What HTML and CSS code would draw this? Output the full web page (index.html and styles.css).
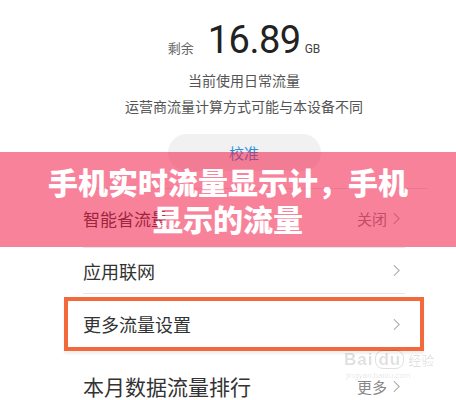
FILE: index.html
```html
<!DOCTYPE html>
<html lang="zh-CN">
<head>
  <meta charset="UTF-8">
  <meta name="viewport" content="width=device-width, initial-scale=1.0">
  <title>手机实时流量显示计</title>
  <link rel="stylesheet" href="styles.css">
</head>
<body>
  <div class="page">
    <div class="content">
      <div class="summary">
        <div class="remain">
          <span class="remain-label">剩余</span>
          <span class="remain-value">16.89</span>
          <span class="remain-unit">GB</span>
        </div>
        <div class="desc">当前使用日常流量</div>
        <div class="note">运营商流量计算方式可能与本设备不同</div>
        <div class="calibrate">校准</div>
      </div>
      <div class="divider wide"></div>
      <div class="row row-saver">
        <span class="row-title">智能省流量</span>
        <span class="row-extra">关闭<svg class="chev" viewBox="0 0 8 14"><polyline points="1,1 7,7 1,13"/></svg></span>
      </div>
      <div class="divider"></div>
      <div class="row row-apps">
        <span class="row-title">应用联网</span>
        <svg class="chev" viewBox="0 0 8 14"><polyline points="1,1 7,7 1,13"/></svg>
      </div>
      <div class="divider"></div>
      <div class="row row-more highlight">
        <span class="row-title">更多流量设置</span>
        <svg class="chev" viewBox="0 0 8 14"><polyline points="1,1 7,7 1,13"/></svg>
      </div>
      <div class="row row-rank">
        <span class="row-title">本月数据流量排行</span>
        <span class="row-extra">更多<svg class="chev" viewBox="0 0 8 14"><polyline points="1,1 7,7 1,13"/></svg></span>
      </div>
    </div>

    <div class="banner">
      <h1>手机实时流量显示计，手机<br>显示的流量</h1>
    </div>

    <div class="watermark">
      <span class="wm-logo">Bai<span class="wm-du">du</span></span><span class="wm-cn">经验</span>
      <div class="wm-url">jingyan.baidu.com</div>
    </div>
  </div>
</body>
</html>
```

FILE: styles.css
```css
body {
  margin: 0;
  padding: 0;
  background: #fff;
  font-family: "Noto Sans CJK SC", "Noto Sans", sans-serif;
  color: #333;
}
.page {
  position: relative;
  width: 456px;
  height: 400px;
  overflow: hidden;
  background: #fff;
}
.content {
  margin-left: 64px;
  width: 360px;
}
.summary {
  display: flex;
  flex-direction: column;
  align-items: center;
  padding-top: 18px;
}
.remain {
  display: flex;
  align-items: baseline;
  height: 44px;
  line-height: 44px;
}
.remain-label {
  font-size: 13px;
  color: #666;
  margin-right: 14px;
}
.remain-value {
  font-family: Roboto, "Noto Sans", sans-serif;
  font-size: 38px;
  color: #222;
  letter-spacing: -0.5px;
}
.remain-unit {
  font-family: Roboto, "Noto Sans", sans-serif;
  font-size: 12px;
  color: #444;
  margin-left: 4px;
}
.desc {
  margin-top: 7px;
  font-size: 14px;
  line-height: 22px;
  color: #555;
}
.note {
  margin-top: 4px;
  font-size: 14px;
  line-height: 22px;
  color: #555;
}
.calibrate {
  margin-top: 17px;
  width: 153px;
  height: 37px;
  line-height: 37px;
  border-radius: 19px;
  background: #f1f1f1;
  text-align: center;
  font-size: 15px;
  color: #2a8fd8;
}
.divider {
  height: 1px;
  background: #e6e6e6;
  margin: 0 19px;
}
.divider.wide {
  margin: 17px -4px 0 0;
}
.row {
  display: flex;
  align-items: center;
  justify-content: space-between;
  padding: 0 24px 0 19px;
  color: #333;
}
.row-saver {
  height: 58px;
  font-size: 17px;
}
.row-apps {
  height: 45px;
  font-size: 18px;
}
.row-more {
  height: 46px;
  font-size: 18px;
  margin-top: 3px;
}
.highlight {
  border: 4px solid #f26a3c;
  padding: 0 20px 0 15px;
  box-shadow: 0 3px 2px rgba(0, 0, 0, 0.06);
}
.row-rank {
  height: 64px;
  font-size: 21px;
  padding-top: 3px;
}
.row-extra {
  display: flex;
  align-items: center;
  font-size: 15px;
  color: #888;
}
.chev {
  width: 7px;
  height: 13px;
  fill: none;
  stroke: #a0a0a0;
  stroke-width: 1.2;
}
.row-extra .chev {
  margin-left: 6px;
}
.banner {
  position: absolute;
  left: 0;
  top: 152px;
  width: 456px;
  height: 95px;
  background: rgba(244, 28, 73, 0.55);
  display: flex;
  align-items: center;
  justify-content: center;
}
.banner h1 {
  margin: 0;
  font-size: 30px;
  font-weight: 900;
  line-height: 37px;
  color: #fff;
  text-align: center;
}
.watermark {
  position: absolute;
  left: 344px;
  top: 350px;
  color: rgba(0, 0, 0, 0.13);
  font-family: "Liberation Sans", sans-serif;
  line-height: 1;
}
.wm-logo {
  font-size: 17px;
  font-weight: bold;
  letter-spacing: 1px;
}
.wm-du {
  display: inline-block;
  border-radius: 8px;
  border: 1px solid rgba(0, 0, 0, 0.12);
  padding: 0 2px;
  margin-left: 2px;
}
.wm-cn {
  font-family: "Noto Sans CJK SC", sans-serif;
  font-size: 13px;
  margin-left: 4px;
}
.wm-url {
  font-size: 8px;
  margin-top: 3px;
  padding-left: 2px;
}
```
